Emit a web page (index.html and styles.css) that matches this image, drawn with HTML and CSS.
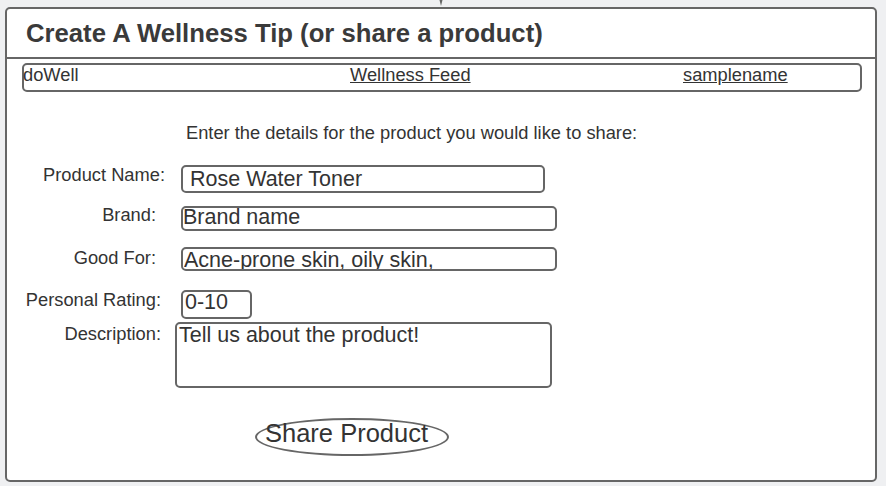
FILE: index.html
```html
<!DOCTYPE html>
<html lang="en">
<head>
    <meta charset="UTF-8">
    <meta name="viewport" content="width=device-width, initial-scale=1.0">
    <title>doWell - Create A Wellness Tip</title>
    <link rel="stylesheet" href="styles.css">
</head>
<body>
    <svg class="pin" width="8" height="7" viewBox="0 0 8 7"><path d="M2.5 0 L5.5 0 L4 6 Z" fill="#666"/></svg>
    <div class="frame">
        <h1 class="frame-title">Create A Wellness Tip (or share a product)</h1>
        <nav class="nav">
            <span class="brand">doWell</span>
            <a href="#">Wellness Feed</a>
            <a href="#">samplename</a>
        </nav>
        <form class="form" onsubmit="return false">
            <p class="intro">Enter the details for the product you would like to share:</p>
            <div class="form-row row-name">
                <label for="name">Product Name:</label>
                <input type="text" id="name" value="Rose Water Toner">
            </div>
            <div class="form-row row-brand">
                <label for="brand" class="short">Brand:</label>
                <input type="text" id="brand" value="Brand name">
            </div>
            <div class="form-row row-good">
                <label for="good" class="short">Good For:</label>
                <input type="text" id="good" value="Acne-prone skin, oily skin,">
            </div>
            <div class="form-row row-rating">
                <label for="rating" class="mid">Personal Rating:</label>
                <input type="text" id="rating" value="0-10">
            </div>
            <div class="form-row row-desc">
                <label for="desc" class="mid">Description:</label>
                <textarea id="desc">Tell us about the product!</textarea>
            </div>
            <button class="share-btn">Share Product</button>
        </form>
    </div>
</body>
</html>
```

FILE: styles.css
```css
body {
    font-family: 'Liberation Sans', Arial, sans-serif;
    margin: 0;
    background: #eff0f2;
    color: #333;
}
.pin {
    position: absolute;
    top: 0;
    left: 437px;
}
.frame {
    box-sizing: border-box;
    width: 872px;
    height: 475px;
    margin: 7px 0 0 5px;
    background: white;
    border: 2px solid #666;
    border-radius: 5px;
}
.frame-title {
    margin: 0;
    padding: 9px 0 9px 19px;
    font-size: 25.7px;
    line-height: 30px;
    font-weight: bold;
    color: #3a3a3a;
    border-bottom: 2px solid #666;
}
.nav {
    box-sizing: border-box;
    display: grid;
    grid-template-columns: 326px 333px auto;
    width: 840px;
    height: 29px;
    margin: 4px 0 0 15px;
    border: 2px solid #666;
    border-radius: 5px;
    font-size: 18.3px;
    line-height: 20px;
}
.nav .brand {
    margin-left: -1px;
}
.nav a {
    color: #333;
    text-decoration: underline;
}
.form {
    padding-top: 31px;
}
.intro {
    margin: 0 0 0 179px;
    font-size: 18.3px;
    line-height: 20px;
}
.form-row {
    display: flex;
    align-items: flex-start;
}
.form-row label {
    box-sizing: border-box;
    width: 158px;
    margin-right: 16px;
    text-align: right;
    font-size: 18.3px;
    line-height: 20px;
}
.form-row label.short {
    padding-right: 9px;
}
.form-row label.mid {
    padding-right: 4px;
}
.form-row input,
.form-row textarea {
    box-sizing: border-box;
    margin: 0;
    padding: 0 0 0 1px;
    border: 2px solid #666;
    border-radius: 5px;
    background: white;
    color: #333;
    font-family: inherit;
    font-size: 21.5px;
    outline: none;
}
.row-name {
    margin-top: 22px;
}
.row-name input {
    width: 364px;
    height: 28px;
    padding-left: 7px;
}
.row-brand {
    margin-top: 13px;
}
.row-brand label {
    margin-top: -1px;
}
.row-brand input {
    width: 376px;
    height: 25px;
    padding-left: 0;
    padding-bottom: 2px;
}
.row-good {
    margin-top: 16px;
}
.row-good label {
    margin-top: 1px;
}
.row-good input {
    width: 376px;
    height: 24px;
    padding-top: 2px;
}
.row-rating {
    margin-top: 19px;
}
.row-rating input {
    width: 71px;
    height: 29px;
    padding-left: 2px;
    padding-bottom: 4px;
}
.row-desc {
    margin-top: 3px;
}
.row-desc label {
    margin-right: 10px;
    padding-top: 2px;
}
.row-desc textarea {
    width: 377px;
    height: 66px;
    padding: 0 0 0 2px;
    line-height: 22px;
    resize: none;
    overflow: hidden;
}
.share-btn {
    box-sizing: border-box;
    display: block;
    width: 194px;
    height: 38px;
    margin: 30px 0 0 248px;
    padding: 0 0 8px 8px;
    border: 2px solid #666;
    border-radius: 50%;
    background: white;
    color: #333;
    font-family: inherit;
    font-size: 25.5px;
    line-height: 26px;
    text-align: left;
    white-space: nowrap;
    cursor: pointer;
}
```
